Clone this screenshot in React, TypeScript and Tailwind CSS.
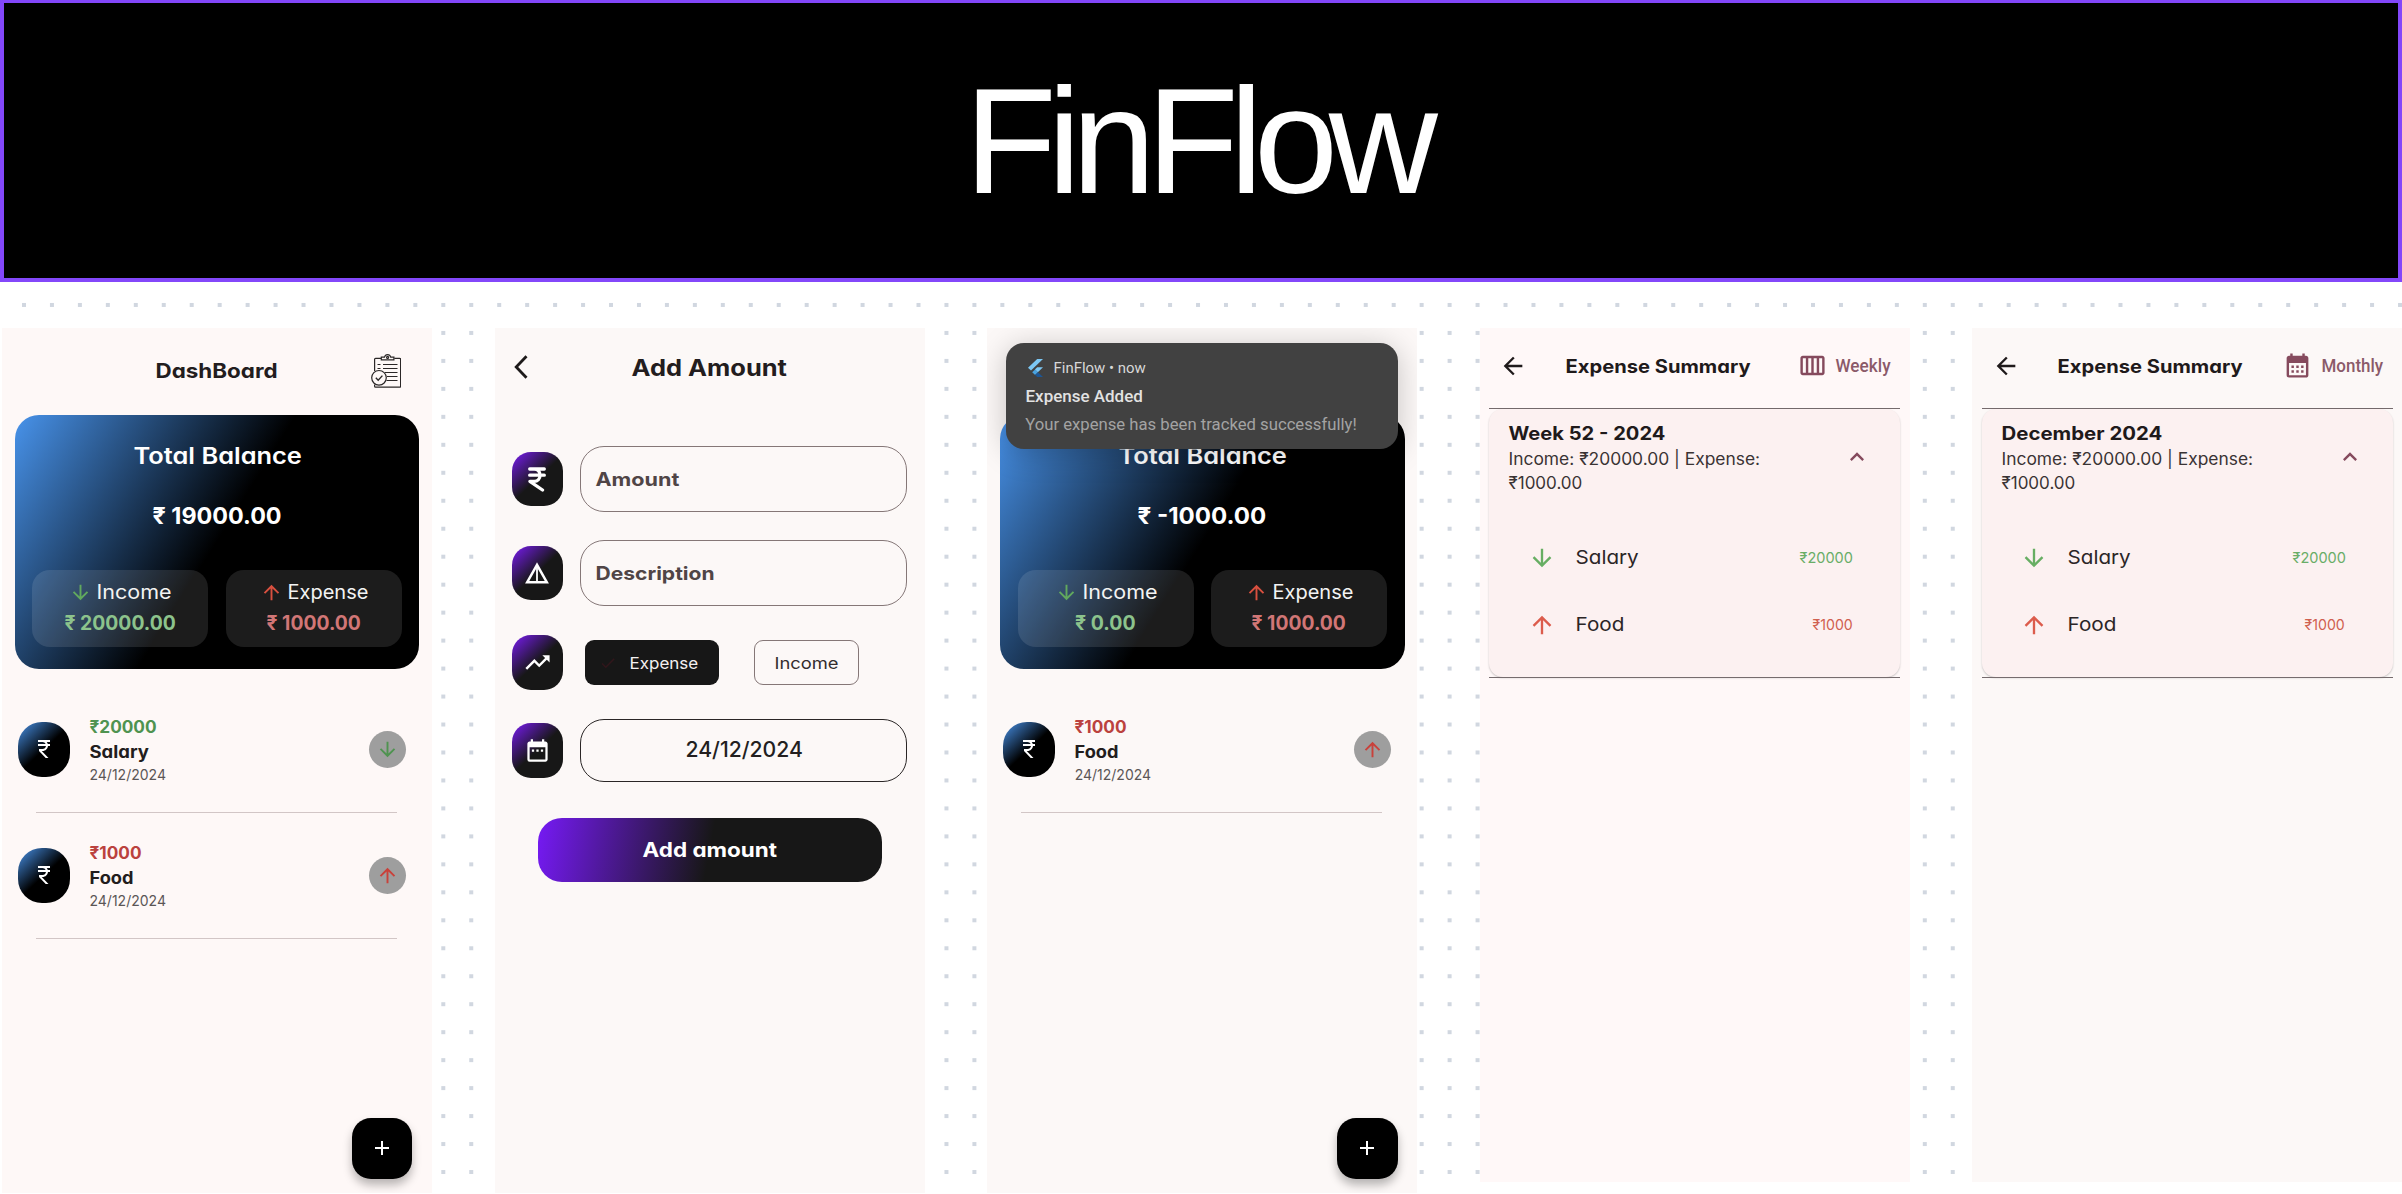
import { useLayoutEffect, useRef, useState } from "react";
import type { ReactNode } from "react";
import {
  MdAdd,
  MdArrowBack,
  MdArrowDownward,
  MdArrowUpward,
  MdCalendarMonth,
  MdCheck,
  MdCurrencyRupee,
  MdDateRange,
  MdExpandLess,
  MdOutlineCalendarViewWeek,
  MdTrendingUp,
} from "react-icons/md";

/** Single line of text stretched so that its glyphs span `w` pixels. */
function Fit({ w, className = "", children }: { w: number; className?: string; children: string }) {
  const ref = useRef<HTMLSpanElement>(null);
  const [scale, setScale] = useState(1);
  useLayoutEffect(() => {
    if (ref.current) setScale((w + 1) / ref.current.offsetWidth);
  }, [w, children]);
  return (
    <span className={"block whitespace-pre text-left " + className} style={{ width: w }}>
      <span ref={ref} className="inline-block origin-left" style={{ transform: `translateX(-0.5px) scaleX(${scale})` }}>
        {children}
      </span>
    </span>
  );
}

function ClipboardIcon() {
  return (
    <svg viewBox="0 0 30 34" className="h-[34px] w-[30px]" fill="none" stroke="#2b2727" strokeWidth="1.2">
      <path d="M10 4.3H4.6a1 1 0 0 0-1 1V17M3.6 30.500v1.700a1 1 0 0 0 1 1h24a1 1 0 0 0 1-1V5.300a1 1 0 0 0-1-1h-5.300" />
      <path d="M10.300 5.800V3.200h3.200c.4-1.600 1.500-2.600 3.100-2.600s2.700 1 3.100 2.600h3.200v2.600z" />
      <circle cx="16.600" cy="3.400" r="1" />
      <path d="M6.500 10.500h3M12 10.500h14.500M6.500 14.500h3M12 14.500h14.500M14 18.500h12.500M16 22.500h10.500M15.500 26.500h11" />
      <circle cx="8" cy="23.800" r="7.300" />
      <path d="M4.800 23.800l2.400 2.400 4.200-4.600" strokeWidth="1.400" />
    </svg>
  );
}

function RoundedRupee() {
  return (
    <svg viewBox="0 0 18 25" className="h-[25px] w-[18px]" fill="none" stroke="white" strokeWidth="3.300" strokeLinecap="round" strokeLinejoin="round">
      <path d="M1.700 2h14.600M1.700 8.200h14.600M1.700 2h4.500c3.700 0 5.800 2.600 5.800 6.200 0 3.700-2.300 6.100-5.800 6.100H1.900L14.500 23" />
    </svg>
  );
}

function TriangleIcon() {
  return (
    <svg viewBox="0 0 24 22" className="h-[22px] w-[24px]" fill="none" stroke="white">
      <path d="M12 2.800L2.200 20.200h19.600z" strokeWidth="2.500" />
      <path d="M12 4v16" strokeWidth="1.800" />
    </svg>
  );
}

function FlutterIcon() {
  return (
    <svg viewBox="0 0 15 18" className="h-[18px] w-[15px]">
      <path d="M9.200 0H15L3 11.600 0 8.800z" fill="#7cc8f5" />
      <path d="M9.200 8.200H15L9.800 13.300 6.900 10.500z" fill="#7cc8f5" />
      <path d="M4.200 13.200l2.900-2.800 2.800 2.800-2.800 2.800z" fill="#4aa3e0" />
      <path d="M7.100 16l2.800-2.800L15 18H9.200z" fill="#1d5694" />
    </svg>
  );
}

function Panel({ className, children }: { className: string; children: ReactNode }) {
  return <section className={"relative flex w-[430px] shrink-0 flex-col overflow-hidden " + className}>{children}</section>;
}

function StatBox({ kind, labelWidth, value, valueWidth }: { kind: "Income" | "Expense"; labelWidth: number; value: string; valueWidth: number }) {
  const income = kind === "Income";
  return (
    <div className="flex h-[76.700px] w-[176px] flex-col items-center rounded-[18px] bg-white/11 pt-[10.500px]">
      <div className="flex h-6 items-center gap-[5px]">
        {income ? <MdArrowDownward className="size-[23px] text-[#61a95e]" /> : <MdArrowUpward className="size-[23px] text-[#d9503f]" />}
        <Fit w={labelWidth} className="text-[19.500px] leading-6 text-[#f3f3f3]">{kind}</Fit>
      </div>
      <Fit w={valueWidth} className={"mt-[7px] text-[19.500px] font-bold leading-6 " + (income ? "text-[#8cc38c]" : "text-[#d17676]")}>
        {value}
      </Fit>
    </div>
  );
}

function BalanceCard({ balance, income, incomeWidth }: { balance: string; income: string; incomeWidth: number }) {
  return (
    <div className="mx-[12.700px] flex h-[254px] shrink-0 flex-col items-center rounded-[24px] bg-[linear-gradient(122deg,#4893eb_0%,#000_50%)] pt-[26.500px] text-white">
      <Fit w={167} className="text-[22.700px] font-semibold leading-[28px]">Total Balance</Fit>
      <Fit w={128} className="mt-[32.500px] text-[23.500px] font-bold leading-[28px]">{balance}</Fit>
      <div className="mt-[39.500px] flex gap-[17.300px]">
        <StatBox kind="Income" labelWidth={74} value={income} valueWidth={incomeWidth} />
        <StatBox kind="Expense" labelWidth={80} value="₹ 1000.00" valueWidth={93} />
      </div>
    </div>
  );
}

function Entry({ amount, amountWidth, name, nameWidth, income }: { amount: string; amountWidth: number; name: string; nameWidth: number; income: boolean }) {
  return (
    <div className="flex h-[126px] shrink-0 flex-col">
      <div className="flex flex-1 items-center pl-[16px] pr-[26px]">
        <div className="flex h-[55px] w-[52px] items-center justify-center rounded-[24px] bg-[linear-gradient(137deg,#4893eb_0%,#000_50%)]">
          <MdCurrencyRupee className="size-[24px] text-white" />
        </div>
        <div className="ml-[20px] flex-1 pt-px">
          <Fit w={amountWidth} className={"text-[16.700px] font-bold leading-[25px] " + (income ? "text-[#4f9350]" : "text-[#bb423e]")}>{amount}</Fit>
          <Fit w={nameWidth} className="text-[16.800px] font-bold leading-[25.400px] text-[#221d1d]">{name}</Fit>
          <Fit w={75} className="text-[14px] leading-[19.600px] text-[#5b5656]">24/12/2024</Fit>
        </div>
        <div className="flex size-[37px] items-center justify-center rounded-full bg-[#9e9e9e]">
          {income ? <MdArrowDownward className="size-[23px] text-[#4f9350]" /> : <MdArrowUpward className="size-[23px] text-[#c9413a]" />}
        </div>
      </div>
      <div className="ml-[34px] h-px w-[361px] bg-[#d2c6c6]" />
    </div>
  );
}

function AddButton() {
  return (
    <button className="absolute bottom-[14px] right-[19.700px] flex size-[60.500px] items-center justify-center rounded-[19px] bg-black text-white shadow-[0_6px_10px_rgba(0,0,0,0.28)]">
      <MdAdd className="size-[24px]" />
    </button>
  );
}

function DashboardPanel() {
  return (
    <Panel className="h-[864.400px] bg-[#fef8f7]">
      <header className="grid h-[87.200px] shrink-0 grid-cols-[1fr_auto_1fr] items-center pb-[2.500px]">
        <span />
        <Fit w={121.500} className="text-[20.300px] font-bold leading-7 text-[#231d1e]">DashBoard</Fit>
        <div className="mr-[31px] justify-self-end">
          <ClipboardIcon />
        </div>
      </header>
      <BalanceCard balance="₹ 19000.00" income="₹ 20000.00" incomeWidth={110} />
      <div className="mt-[17.500px]">
        <Entry amount="₹20000" amountWidth={66} name="Salary" nameWidth={58.500} income />
        <Entry amount="₹1000" amountWidth={51.500} name="Food" nameWidth={43.500} income={false} />
      </div>
      <AddButton />
    </Panel>
  );
}

function NotifiedPanel() {
  return (
    <Panel className="h-[864.400px] bg-[#fcf8f7]">
      <div className="h-[87.200px] shrink-0" />
      <BalanceCard balance="₹ -1000.00" income="₹ 0.00" incomeWidth={60} />
      <div className="mt-[17.500px]">
        <Entry amount="₹1000" amountWidth={51.500} name="Food" nameWidth={43.500} income={false} />
      </div>
      <AddButton />
      <div className="absolute left-[19px] top-[15px] h-[105.300px] w-[392px] rounded-[18px] bg-[#414141] px-[19.500px] pt-[13.500px] font-[family-name:Roboto,sans-serif] shadow-[0_4px_30px_rgba(0,0,0,0.22)]">
        <div className="flex h-[22px] items-center gap-[11.500px] pl-[2px]">
          <FlutterIcon />
          <Fit w={91.500} className="text-[14.700px] leading-[22px] text-[#d8d8d8]">FinFlow • now</Fit>
        </div>
        <Fit w={116} className="mt-[6.500px] text-[16.700px] font-medium leading-[24px] text-[#e2e2e2]">Expense Added</Fit>
        <Fit w={331} className="mt-[4px] text-[16.700px] leading-[24px] text-[#a3a3a3]">Your expense has been tracked successfully!</Fit>
      </div>
    </Panel>
  );
}

function FormRow({ icon, className, children }: { icon: ReactNode; className: string; children: ReactNode }) {
  return (
    <div className={"flex items-center " + className}>
      <div className="mr-[17px] flex h-[54.500px] w-[51.600px] shrink-0 items-center justify-center rounded-[19px] bg-[linear-gradient(137deg,#7a1bf5_0%,#171717_50%)] text-white">
        {icon}
      </div>
      {children}
    </div>
  );
}

function AddAmountPanel() {
  return (
    <Panel className="h-[864.400px] bg-[#fcf8f7]">
      <header className="grid h-[117.800px] shrink-0 grid-cols-[1fr_auto_1fr] items-start pt-[26px]">
        <svg viewBox="0 0 14 24" className="ml-[19px] mt-[1px] h-[24px] w-[14px]" fill="none" stroke="#1d1a1a" strokeWidth="2.800">
          <path d="M12.500 1.200L2.200 12l10.300 10.800" />
        </svg>
        <Fit w={154.500} className="text-[22.600px] font-bold leading-7 text-[#231d1e]">Add Amount</Fit>
        <span />
      </header>
      <div className="flex flex-col pl-[17px]">
        <FormRow icon={<RoundedRupee />} className="h-[66.300px]">
          <div className="flex h-full w-[326.700px] items-center rounded-[24px] border border-[#857777] pl-[14.500px]">
            <Fit w={83} className="text-[18.500px] font-bold leading-6 text-[#504546]">Amount</Fit>
          </div>
        </FormRow>
        <FormRow icon={<TriangleIcon />} className="mt-[27.700px] h-[66.300px]">
          <div className="flex h-full w-[326.700px] items-center rounded-[24px] border border-[#857777] pl-[14.500px]">
            <Fit w={118.500} className="text-[18.500px] font-bold leading-6 text-[#504546]">Description</Fit>
          </div>
        </FormRow>
        <FormRow icon={<MdTrendingUp className="size-[29px]" />} className="mt-[29px] h-[54.500px]">
          <div className="ml-[5px] flex h-[45.500px] w-[133.700px] items-center rounded-[9px] bg-[#171717] pl-[14px]">
            <MdCheck className="size-[18px] text-[#31161b]" />
            <Fit w={68} className="ml-[13px] text-[16.500px] leading-6 text-[#f3f0f0]">Expense</Fit>
          </div>
          <div className="ml-[35.300px] flex h-[45.500px] w-[104.700px] items-center justify-center rounded-[9px] border border-[#857777]">
            <Fit w={63.500} className="text-[16.500px] leading-6 text-[#332c2d]">Income</Fit>
          </div>
        </FormRow>
        <FormRow icon={<MdDateRange className="size-[27px]" />} className="mt-[28.700px] h-[63.400px]">
          <div className="flex h-full w-[326.700px] items-center justify-center rounded-[24px] border border-[#2a2626]">
            <Fit w={116} className="text-[20.800px] font-medium leading-6 text-[#231f1f]">24/12/2024</Fit>
          </div>
        </FormRow>
      </div>
      <button className="ml-[43px] mt-[36.300px] flex h-[64px] w-[344px] shrink-0 items-center justify-center rounded-[24px] bg-[linear-gradient(100.500deg,#761af5_0%,#171717_50%)] text-white">
        <Fit w={133} className="text-[19.800px] font-bold leading-7">Add amount</Fit>
      </button>
    </Panel>
  );
}

function SummaryRow({ income, name, nameWidth, amount, amountWidth }: { income: boolean; name: string; nameWidth: number; amount: string; amountWidth: number }) {
  return (
    <div className="flex h-[67px] items-center pl-[38.500px] pr-[48px]">
      {income ? <MdArrowDownward className="size-[28px] text-[#67ae63]" /> : <MdArrowUpward className="size-[28px] text-[#dc5c4c]" />}
      <Fit w={nameWidth} className="ml-[20px] text-[19px] leading-7 text-[#2b2526]">{name}</Fit>
      <Fit w={amountWidth} className={"ml-auto text-[14px] leading-7 " + (income ? "text-[#69ad67]" : "text-[#d0604f]")}>{amount}</Fit>
    </div>
  );
}

function SummaryPanel({ className, icon, period, periodWidth, heading, headingWidth }: { className: string; icon: ReactNode; period: string; periodWidth: number; heading: string; headingWidth: number }) {
  return (
    <Panel className={"h-[853.400px] " + className}>
      <header className="flex h-[80px] shrink-0 items-center pb-[5.500px] pl-[19.500px] pr-[19.500px]">
        <MdArrowBack className="size-[28px] text-[#1f1a1b]" />
        <Fit w={184} className="ml-[38.500px] text-[18.200px] font-bold leading-7 text-[#1f1a1b]">Expense Summary</Fit>
        <div className="ml-auto flex items-center gap-[9.500px] text-[#854a5d]">
          {icon}
          <Fit w={periodWidth} className="font-[family-name:Roboto,sans-serif] text-[17.500px] font-medium leading-7 text-[#8b5a69]">{period}</Fit>
        </div>
      </header>
      <div className="mx-[9.500px]">
        <div className="h-px bg-[#756b6d]" />
        <div className="h-[268px] rounded-[14px] bg-[#fcf1f1] shadow-[0_1px_2px_rgba(0,0,0,0.22)]">
          <div className="flex pl-[20px] pr-[29px] pt-[11px]">
            <div className="flex-1">
              <Fit w={headingWidth} className="text-[18.200px] font-bold leading-[27px] text-[#1f1a1b]">{heading}</Fit>
              <Fit w={251} className="text-[16.800px] leading-[24px] text-[#3a3334]">Income: ₹20000.00 | Expense:</Fit>
              <Fit w={73} className="text-[16.800px] leading-[24px] text-[#3a3334]">₹1000.00</Fit>
            </div>
            <MdExpandLess className="mt-[22.500px] size-[28px] text-[#854a5d]" />
          </div>
          <div className="mt-[29px]">
            <SummaryRow income name="Salary" nameWidth={62} amount="₹20000" amountWidth={52} />
            <SummaryRow income={false} name="Food" nameWidth={48} amount="₹1000" amountWidth={39.500} />
          </div>
        </div>
        <div className="relative h-px bg-[#756b6d]" />
      </div>
    </Panel>
  );
}

export default function App() {
  return (
    <main className="h-[1194px] w-[2402px] overflow-hidden bg-white font-[family-name:Inter,sans-serif] [font-feature-settings:'cv11']">
      <div className="flex h-full flex-col bg-[conic-gradient(from_270deg_at_4px_4px,#d1d7e0_90deg,transparent_0)] bg-[length:27.960px_27.970px] bg-[position:22px_23.300px]">
        <div className="flex h-[282px] shrink-0 items-center justify-center border-4 border-t-3 border-[#8347fa] bg-black">
          <h1 className="mr-[9px] pb-[1px] font-[family-name:Liberation_Sans,Arial,sans-serif] text-[151px] leading-none tracking-[-0.061em] text-white">FinFlow</h1>
        </div>
        <div className="flex items-start gap-[62.600px] pl-[2px] pt-[46.300px]">
          <DashboardPanel />
          <AddAmountPanel />
          <NotifiedPanel />
          <SummaryPanel
            className="bg-[#fff8f8]"
            icon={<MdOutlineCalendarViewWeek className="size-[29px]" />}
            period="Weekly"
            periodWidth={54}
            heading="Week 52 - 2024"
            headingWidth={156}
          />
          <SummaryPanel
            className="bg-[#fcf8f7]"
            icon={<MdCalendarMonth className="size-[29px]" />}
            period="Monthly"
            periodWidth={61}
            heading="December 2024"
            headingWidth={159.500}
          />
        </div>
      </div>
    </main>
  );
}
